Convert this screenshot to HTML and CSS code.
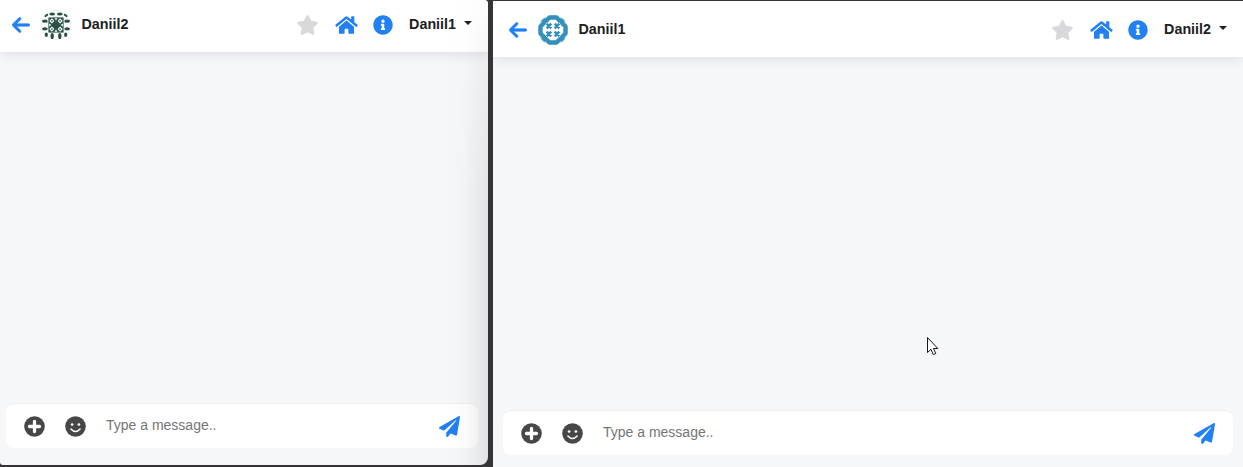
FILE: index.html
```html
<!DOCTYPE html>
<html lang="en">
<head>
<meta charset="utf-8">
<title>Messenger</title>
<link rel="stylesheet" href="styles.css">
</head>
<body>
<svg class="sprite" aria-hidden="true">
  <symbol id="arrow" viewBox="0 0 448 512"><path stroke="#2180f3" stroke-width="16" d="M9.4 233.4c-12.5 12.5-12.5 32.8 0 45.3l160 160c12.5 12.5 32.8 12.5 45.3 0s12.5-32.8 0-45.3L109.2 288 416 288c17.7 0 32-14.3 32-32s-14.3-32-32-32l-306.7 0L214.6 118.6c12.5-12.5 12.5-32.8 0-45.3s-32.8-12.5-45.3 0l-160 160z"/></symbol>
  <symbol id="star" viewBox="0 0 576 512"><path d="M316.9 18C311.6 7 300.4 0 288.1 0s-23.4 7-28.8 18L195 150.3 51.4 171.5c-12 1.8-22 10.2-25.7 21.7s-.7 24.2 7.9 32.7L137.8 329 113.2 474.7c-2 12 3 24.2 12.9 31.3s23 8 33.8 2.3l128.3-68.5 128.3 68.5c10.8 5.7 23.9 4.9 33.8-2.3s14.9-19.3 12.9-31.3L438.5 329 542.7 225.9c8.6-8.5 11.7-21.2 7.9-32.7s-13.7-19.9-25.7-21.7L381.2 150.3 316.9 18z"/></symbol>
  <symbol id="home" viewBox="0 0 576 512"><path d="M280.37 148.26L96 300.11V464a16 16 0 0 0 16 16l112.06-.29a16 16 0 0 0 15.92-16V368a16 16 0 0 1 16-16h64a16 16 0 0 1 16 16v95.64a16 16 0 0 0 16 16.05L464 480a16 16 0 0 0 16-16V300L295.67 148.26a12.19 12.19 0 0 0-15.3 0zM571.6 251.47L488 182.56V44.05a12 12 0 0 0-12-12h-56a12 12 0 0 0-12 12v72.61L318.47 43a48 48 0 0 0-61 0L4.34 251.47a12 12 0 0 0-1.6 16.9l25.5 31A12 12 0 0 0 45.15 301l235.22-193.74a12.19 12.19 0 0 1 15.3 0L530.9 301a12 12 0 0 0 16.9-1.6l25.5-31a12 12 0 0 0-1.7-16.93z"/></symbol>
  <symbol id="info" viewBox="0 0 512 512"><path d="M256 8C119.043 8 8 119.083 8 256c0 136.997 111.043 248 248 248s248-111.003 248-248C504 119.083 392.957 8 256 8zm0 110c23.196 0 42 18.804 42 42s-18.804 42-42 42-42-18.804-42-42 18.804-42 42-42zm56 254c0 6.627-5.373 12-12 12h-88c-6.627 0-12-5.373-12-12v-24c0-6.627 5.373-12 12-12h12v-64h-12c-6.627 0-12-5.373-12-12v-24c0-6.627 5.373-12 12-12h64c6.627 0 12 5.373 12 12v100h12c6.627 0 12 5.373 12 12v24z"/></symbol>
  <symbol id="plus" viewBox="0 0 21 21"><circle cx="10.5" cy="10.5" r="10.3"/><path d="M10.5 5.5v10M5.5 10.5h10" stroke="#fff" stroke-width="3.3" stroke-linecap="round"/></symbol>
  <symbol id="smile" viewBox="0 0 21 21"><circle cx="10.5" cy="10.5" r="10.3"/><circle cx="7.1" cy="8.5" r="1.35" fill="#fff"/><circle cx="13.9" cy="8.5" r="1.35" fill="#fff"/><path d="M5.9 13.1q4.6 5 9.2 0" fill="none" stroke="#fff" stroke-width="1.5" stroke-linecap="round"/></symbol>
  <symbol id="plane" viewBox="0 0 512 512"><path d="M476 3.2L12.5 270.6c-18.1 10.4-15.8 35.6 2.2 43.2L121 358.4l287.3-253.2c5.5-4.9 13.3 2.6 8.6 8.3L176 407v80.5c0 23.6 28.5 32.9 42.5 15.8L282 426l124.6 52.2c14.2 6 30.4-2.9 33-18.2l72-432C515 7.8 493.3-6.8 476 3.2z"/></symbol>
</svg>
<main class="desktop">
  <section class="pane pane-left">
    <header class="bar">
      <svg class="icon arrow"><use href="#arrow"/></svg>
      <svg class="avatar" viewBox="-15 -15 30 30">
        <circle r="14.6" fill="#fff" stroke="#e3e5e5" stroke-width=".8"/>
        <g fill="#2a5148">
          <ellipse cx="-3.8" cy="-11" rx="2.9" ry="1.5"/><ellipse cx="3.8" cy="-11" rx="2.9" ry="1.5"/>
          <ellipse cx="-9.6" cy="-9.6" rx="2.2" ry="1.2" transform="rotate(-38 -9.6 -9.6)"/><ellipse cx="9.6" cy="-9.6" rx="2.2" ry="1.2" transform="rotate(38 9.6 -9.6)"/>
          <ellipse cx="-3.8" cy="11" rx="1.7" ry="3.1"/><ellipse cx="3.8" cy="11" rx="1.7" ry="3.1"/>
          <ellipse cx="-9.7" cy="9.8" rx="1.6" ry="2.2"/><ellipse cx="9.7" cy="9.8" rx="1.6" ry="2.2"/>
          <ellipse cx="-11.1" cy="-3.8" rx="2.9" ry="1.6"/><ellipse cx="11.1" cy="-3.8" rx="2.9" ry="1.6"/>
          <ellipse cx="-11.1" cy="3.8" rx="2.9" ry="1.6"/><ellipse cx="11.1" cy="3.8" rx="2.9" ry="1.6"/>
          <path d="M-7.6-7.6H7.6V7.6H-7.6z"/>
        </g>
        <g fill="#fff">
          <path d="M-4.1-6.8-1.6-4.1-4.1-1.4-6.8-4.1zM4.1-6.8 6.8-4.1 4.1-1.4 1.6-4.1zM-4.1 1.4-1.6 4.1-4.1 6.8-6.8 4.1zM4.1 1.4 6.8 4.1 4.1 6.8 1.6 4.1z"/>
          <path d="M-1.5-6.8h3L0-4.6zM-1.5 6.8h3L0 4.6zM-6.8-1.5v3L-4.6 0zM6.8-1.5v3L4.6 0z"/>
        </g>
        <path d="M-5-4.1h1.8M3.2-4.1H5M-5 4.1h1.8M3.2 4.1H5" stroke="#2a5148" stroke-width="1.2"/>
      </svg>
      <span class="name peer">Daniil2</span>
      <svg class="icon star"><use href="#star"/></svg>
      <svg class="icon home"><use href="#home"/></svg>
      <svg class="icon info"><use href="#info"/></svg>
      <span class="name">Daniil1</span><i class="caret"></i>
    </header>
    <div class="composer">
      <svg class="tool"><use href="#plus"/></svg>
      <svg class="tool"><use href="#smile"/></svg>
      <span class="prompt">Type a message..</span>
      <svg class="tool send"><use href="#plane"/></svg>
    </div>
  </section>
  <section class="pane pane-right">
    <header class="bar">
      <svg class="icon arrow"><use href="#arrow"/></svg>
      <svg class="avatar" viewBox="-15 -15 30 30">
        <circle r="14.6" fill="#fff" stroke="#e3e5e5" stroke-width=".8"/>
        <path d="M-3.5-12.5H3.5L6.8-9.2Q9.2-9.2 9.2-6.8L12.5-3.5V3.5L9.2 6.8Q9.2 9.2 6.8 9.2L3.5 12.5H-3.5L-6.8 9.2Q-9.2 9.2-9.2 6.8L-12.5 3.5V-3.5L-9.2-6.8Q-9.2-9.2-6.8-9.2z" fill="none" stroke="#338fbb" stroke-width="4.4" stroke-linejoin="round"/>
        <path d="M-12.3-7.5Q-11-11-7.5-12.3M12.3-7.5Q11-11 7.5-12.3M-12.3 7.5Q-11 11-7.5 12.3M12.3 7.5Q11 11 7.5 12.3" fill="none" stroke="#338fbb" stroke-width=".8"/>
        <path d="M-6.3-6.3l4.6 4.6M-1.7-6.3l-4.6 4.6M1.7-6.3l4.6 4.6M6.3-6.3 1.7-1.7M-6.3 1.7l4.6 4.6M-1.7 1.7l-4.6 4.6M1.7 1.7l4.6 4.6M6.3 1.7 1.7 6.3" stroke="#338fbb" stroke-width="2.5"/>
      </svg>
      <span class="name peer">Daniil1</span>
      <svg class="icon star"><use href="#star"/></svg>
      <svg class="icon home"><use href="#home"/></svg>
      <svg class="icon info"><use href="#info"/></svg>
      <span class="name">Daniil2</span><i class="caret"></i>
    </header>
    <div class="composer">
      <svg class="tool"><use href="#plus"/></svg>
      <svg class="tool"><use href="#smile"/></svg>
      <span class="prompt">Type a message..</span>
      <svg class="tool send"><use href="#plane"/></svg>
    </div>
  </section>
  <svg class="cursor" viewBox="0 0 13 20"><path d="M1.5 1.5v15l3.5-3.2 2.3 5.3 2.5-1.1-2.3-5h4.3z" fill="#fff" stroke="#17171f" stroke-width="1"/></svg>
</main>
</body>
</html>
```
FILE: styles.css
```css
* { box-sizing: border-box; }
body { margin: 0; font-family: "Liberation Sans", Arial, sans-serif; }
.sprite { display: none; }
.desktop {
  display: flex;
  position: relative;
  width: 1243px;
  height: 467px;
  overflow: hidden;
  background: #363436;
}
.pane {
  display: flex;
  flex-direction: column;
  position: relative;
  overflow: hidden;
  background: #f6f7f9;
}
.pane-left { width: 488px; height: 465px; border-radius: 0 4px 8px 3px; }
.pane-left::after {
  content: "";
  position: absolute;
  inset: 0 0 0 auto;
  width: 42px;
  background: linear-gradient(to right, rgba(0,0,0,0), rgba(0,0,0,.015) 45%, rgba(0,0,0,.08));
  -webkit-mask-image: linear-gradient(rgba(0,0,0,.15), rgba(0,0,0,.5) 55px, #000 200px);
  mask-image: linear-gradient(rgba(0,0,0,.15), rgba(0,0,0,.5) 55px, #000 200px);
}
.pane-right { width: 750px; height: 466px; margin: 1px 0 0 5px; }
.bar {
  display: flex;
  align-items: center;
  flex: none;
  height: 56px;
  padding: 2px 16px 0;
  background: #fff;
  box-shadow: 0 3px 10px rgba(50,55,65,.11);
}
.pane-left .bar { margin-top: -4px; padding-left: 12px; }
.icon { flex: none; height: 20px; fill: #2180f3; }
.arrow { width: 18px; overflow: visible; }
.avatar { flex: none; width: 30px; height: 30px; margin-left: 11px; }
.name {
  margin-bottom: 2px;
  font-size: 14.3px;
  font-weight: 700;
  line-height: 20px;
  color: #202020;
}
.peer { margin-left: 10.5px; margin-right: auto; }
.star { width: 23px; fill: #d9d9db; }
.home { width: 23px; margin-left: 16px; }
.info { width: 20px; margin: 0 16px 0 15px; }
.caret {
  margin: 0 0 4px 8px;
  border: 4px solid transparent;
  border-top-color: #202020;
  border-bottom: 0;
}
.composer {
  display: flex;
  align-items: center;
  height: 44px;
  margin: auto 10px 12px;
  padding: 1px 18px 0;
  border-radius: 8px;
  background: #fff;
  box-shadow: 0 -1px 1px rgba(0,0,0,.035);
}
.pane-left .composer { margin: auto 10px 17px 6px; }
.tool { flex: none; width: 21px; height: 21px; margin-right: 20px; fill: #474747; }
.prompt { flex: 1; margin-bottom: 3px; font-size: 14px; line-height: 20px; color: #757575; }
.send { margin-right: 0; fill: #2180f3; }
.cursor { position: absolute; left: 926px; top: 336px; width: 13px; height: 20px; }
```
